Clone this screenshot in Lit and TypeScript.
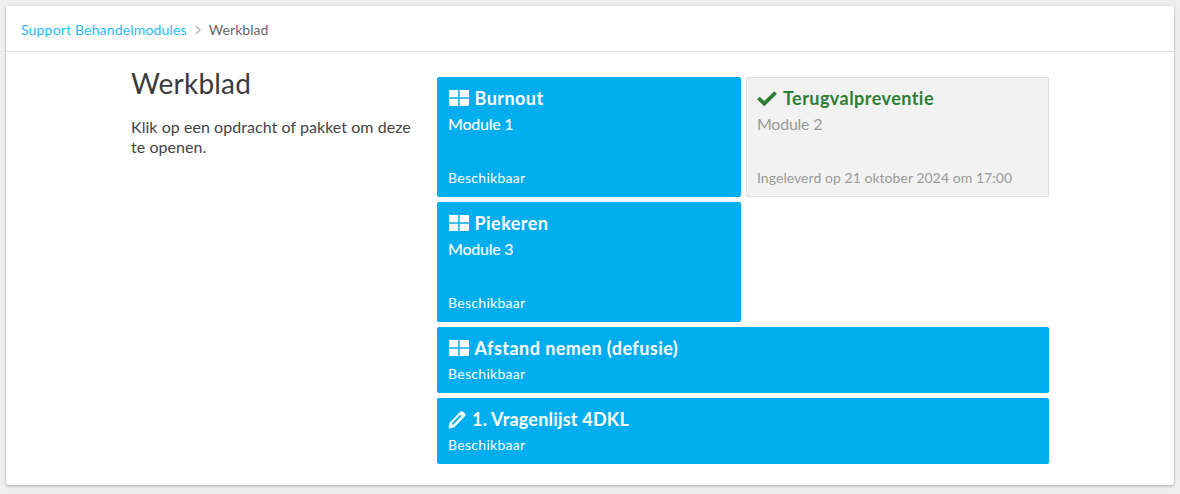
import { LitElement, html, css, svg } from "lit";
import { customElement } from "lit/decorators.js";

const grid = svg`<svg class="ico grid" viewBox="0 0 20 16" width="20" height="16"><path fill="#fff" d="M0 1.200C0 .5.5 0 1.200 0h8v7.200H0zM10.700 0h8.100c.7 0 1.200.5 1.200 1.200v6h-9.300zM0 8.800h9.200V16H1.200C.5 16 0 15.500 0 14.800zM10.700 8.800H20v6c0 .7-.5 1.200-1.200 1.200h-8.100z"/></svg>`;
const check = svg`<svg class="ico check" viewBox="0 0 20 15" width="20" height="15"><path fill="none" stroke="#2e7d32" stroke-width="3.800" d="M1.400 7 7.300 12.700 18.600 1.700"/></svg>`;
const pencil = svg`<svg class="ico pencil" viewBox="0 0 18 19" width="18" height="19"><path fill="#fff" d="M.5 18.500 1.800 12.600 12 2c1.100-1.100 2.500-1.100 3.500-.1l1.300 1.300c1 1 1 2.300 0 3.400L6.300 17.200z"/><path fill="#00aeef" d="M3.600 13.700 12.200 4.700l1.300 1.200L4.900 15z"/></svg>`;

@customElement("app-root")
export class AppRoot extends LitElement {
  static styles = css`
    :host { display: block; min-height: 494px; background: #eeeeee; font-family: Lato, "Open Sans", sans-serif; padding: 6px; box-sizing: border-box; color: #444; }
    .panel { background: #fff; border-radius: 3px; box-shadow: 0 1px 3px rgba(0,0,0,.3); height: 479px; width: 1168px; box-sizing: border-box; }
    .crumbs { height: 46px; box-sizing: border-box; border-bottom: 1px solid #ddd; display: flex; align-items: center; padding: 2px 15px 0; font-size: 14px; letter-spacing: .17px; }
    .crumbs a { color: #26bcf7; }
    .sep { margin: 0 7px 0 8px; display: flex; }
    .crumbs span.cur { color: #666; letter-spacing: .05px; }
    .content { display: grid; grid-template-columns: 306px 612px; margin: 25px 0 0 125px; }
    .intro { margin-top: -11px; }
    h1 { margin: 0; font-size: 28px; font-weight: 400; line-height: 34px; color: #3b3b3b; letter-spacing: .2px; }
    .intro p { margin: 17px 0 0; font-size: 16px; line-height: 20px; width: 285px; color: #444; letter-spacing: .05px; }
    .cards { display: grid; grid-template-columns: 304px 303px; gap: 5px; }
    .card { box-sizing: border-box; border-radius: 2px; background: #00aeef; color: #fff; padding: 11px 11px 10px; display: flex; flex-direction: column; height: 120px; }
    .card.wide { grid-column: 1 / 3; height: 66px; }
    .card.done { background: #f2f2f2; border: 1px solid #ddd; padding: 10px 10px 9px; color: #999; }
    .title { display: flex; align-items: center; gap: 6px; font-size: 18px; font-weight: 700; line-height: 20px; letter-spacing: .45px; }
    .tight .title { letter-spacing: .2px; }
    .done .title { color: #2e7d32; }
    .sub { font-size: 16px; line-height: 20px; margin-top: 6px; font-weight: 500; letter-spacing: -.25px; }
    .done .sub { font-weight: 400; }
    .status { margin-top: auto; font-size: 14px; line-height: 18px; letter-spacing: .3px; }
    .done .status { letter-spacing: .05px; }
    .ico { flex: none; }
    .grid { margin: 0 -.5px 0 1px; }
  `;
  card(icon: unknown, title: string, sub: string, status: string, cls = "") {
    return html`<div class="card ${cls}">
      <div class="title">${icon}<span>${title}</span></div>
      ${sub ? html`<div class="sub">${sub}</div>` : ""}
      <div class="status">${status}</div>
    </div>`;
  }
  render() {
    return html`<div class="panel">
      <div class="crumbs"><a>Support Behandelmodules</a>
        <span class="sep"><svg width="7" height="10" viewBox="0 0 7 10"><path d="M1 1l4 4-4 4" fill="none" stroke="#bbb" stroke-width="1.500"/></svg></span>
        <span class="cur">Werkblad</span></div>
      <div class="content">
        <div class="intro"><h1>Werkblad</h1><p>Klik op een opdracht of pakket om deze te openen.</p></div>
        <div class="cards">
          ${this.card(grid, "Burnout", "Module 1", "Beschikbaar")}
          ${this.card(check, "Terugvalpreventie", "Module 2", "Ingeleverd op 21 oktober 2024 om 17:00", "done")}
          ${this.card(grid, "Piekeren", "Module 3", "Beschikbaar")}
          <div></div>
          ${this.card(grid, "Afstand nemen (defusie)", "", "Beschikbaar", "wide")}
          ${this.card(pencil, "1. Vragenlijst 4DKL", "", "Beschikbaar", "wide tight")}
        </div>
      </div>
    </div>`;
  }
}
